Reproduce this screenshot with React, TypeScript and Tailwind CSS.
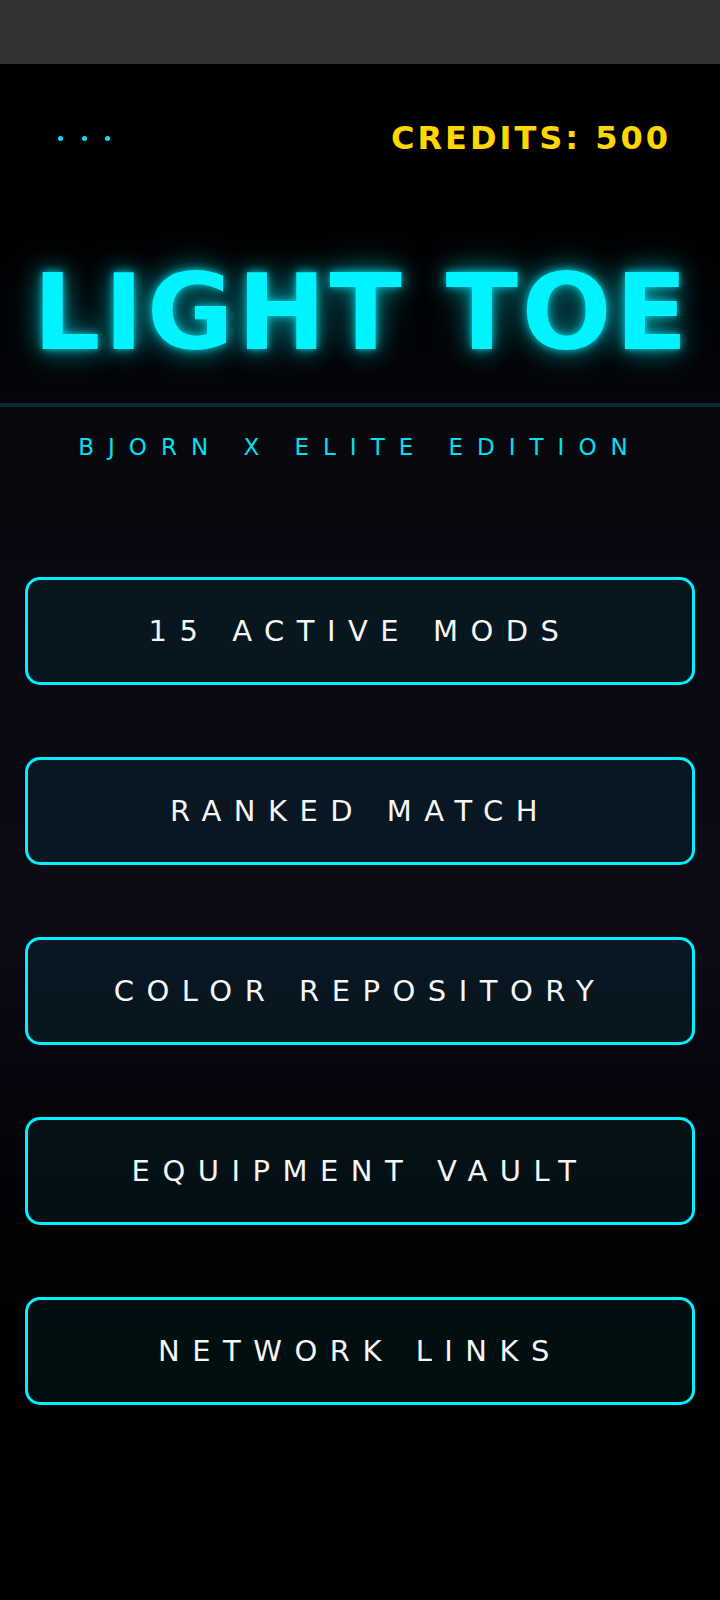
import React from 'react';

const menuItems = ['15 ACTIVE MODS', 'RANKED MATCH', 'COLOR REPOSITORY', 'EQUIPMENT VAULT', 'NETWORK LINKS'];

function MenuButton({ label }: { label: string }) {
  return (
    <button
      className="flex h-[108px] w-full items-center justify-center rounded-[15px] border-[3px] border-[#00f0ff] bg-[#00f0ff]/[0.06] text-[29px] leading-none tracking-[12.5px] text-[#f5f5f5]"
    >
      {label}
    </button>
  );
}

export default function App() {
  return (
    <div className="flex min-h-[1600px] flex-col bg-black font-['DejaVu_Sans',sans-serif]">
      {/* status bar */}
      <div className="h-16 bg-[#333333]" />

      <header className="border-b-4 border-[#0a2a33] bg-gradient-to-b from-black to-[#05050a] pb-[37px] pt-[54px]">
        <div className="flex h-10 items-center justify-between pl-[58px] pr-[49px]">
          <div className="flex items-center gap-[18.5px]">
            <span className="h-[5px] w-[5px] rounded-full bg-[#00e5ff]" />
            <span className="h-[5px] w-[5px] rounded-full bg-[#00e5ff]" />
            <span className="h-[5px] w-[5px] rounded-full bg-[#00e5ff]" />
          </div>
          <span className="text-[32px] font-bold leading-none tracking-[3px] text-[#ffd700]">CREDITS: 500</span>
        </div>

        <h1 className="mt-[102px] pl-[4px] text-center text-[106px] font-bold leading-none tracking-[3.5px] text-[#00f3ff] [text-shadow:0_0_8px_rgba(0,243,255,0.8),0_0_24px_rgba(0,243,255,0.5),0_0_44px_rgba(0,243,255,0.3)]">
          LIGHT TOE
        </h1>
      </header>

      <main className="flex flex-1 flex-col bg-gradient-to-b from-[#07070d] via-[#0b0b16] via-45% to-black px-[25px] pt-[29px]">
        <p className="text-center text-[23px] leading-none tracking-[14px] text-[#00e0f0]">BJORN X ELITE EDITION</p>

        <div className="mt-[118px] flex flex-col gap-[72px]">
          {menuItems.map((item) => (
            <MenuButton key={item} label={item} />
          ))}
        </div>
      </main>
    </div>
  );
}
